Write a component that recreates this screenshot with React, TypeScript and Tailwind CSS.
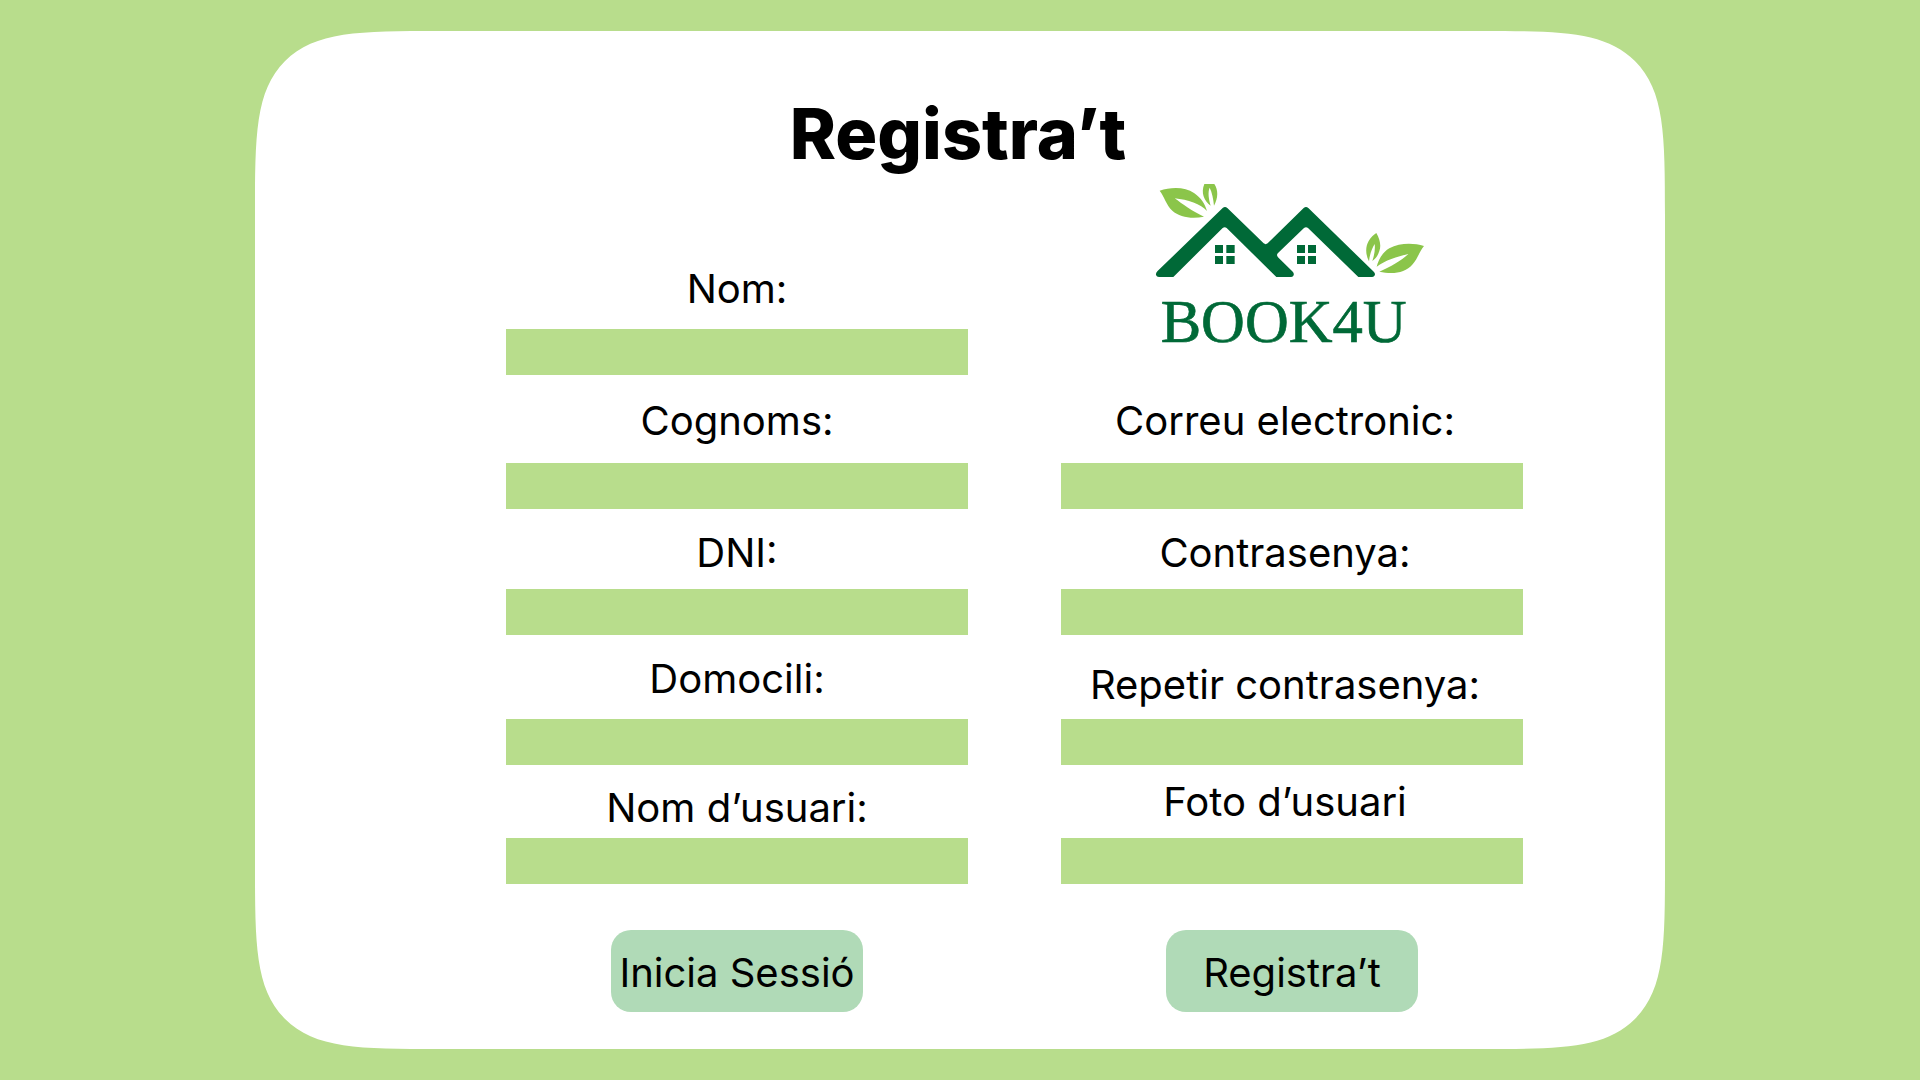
type FieldProps = {
  id: string;
  label: string;
  type?: string;
  labelClass: string;
};

function Field({ id, label, type = "text", labelClass }: FieldProps) {
  return (
    <div className="flex flex-col">
      <label htmlFor={id} className={`text-center text-[40px] leading-[48px] ${labelClass}`}>
        {label}
      </label>
      <input
        id={id}
        name={id}
        type={type}
        className="h-[46px] w-full bg-[#b8dd8c] px-3 text-2xl outline-none file:hidden focus:ring-2 focus:ring-[#006937] [&[type=file]]:text-transparent"
      />
    </div>
  );
}

function Logo() {
  return (
    <svg viewBox="42 39 828 522" className="mb-[18px] w-[276px] justify-self-center" role="img" aria-label="BOOK4U">
      <g fill="#8bc54a">
        <path d="M59 62C93 50 136 50 162 69C184 84 195 102 201 123C183 103 143 89 104 85C126 101 157 125 192 140C155 147 119 142 97 122C78 104 73 79 59 62Z" />
        <path d="M193 42H223C235 60 235 83 222 107C220 87 216 67 209 53C203 67 206 87 212 107C192 93 182 68 193 42Z" />
        <path d="M709 189C720 208 724 228 718 243C713 258 707 266 697 273C703 255 706 238 704 222C695 237 689 254 687 274C676 253 676 230 686 213C692 202 701 195 709 189Z" />
        <path d="M852 228C839 243 834 264 818 283C795 310 757 314 718 305C752 291 783 272 805 252C771 260 735 271 710 290C716 267 728 247 748 235C779 218 820 218 852 228Z" />
      </g>
      <g fill="#006937">
        <path d="M248 114Q255 108 262 114L371 220Q377 225 383 220L491 114Q498 108 505 114L702 306Q708 313 702 319Q700 321 696 321H655L504 174Q498 169 492 174L414 249Q408 255 414 262L459 306Q464 313 459 319Q457 321 453 321H409L260 174Q254 169 248 174L100 321H57Q50 321 48 315Q47 309 52 304Z" />
        <path d="M225 225h24v24h-24zM259 225h25v24h-25zM225 258h24v24h-24zM259 258h25v24h-25zM471 225h24v24h-24zM504 225h24v24h-24zM471 258h24v24h-24zM504 258h24v24h-24z" />
        <text
          x="431"
          y="516"
          textAnchor="middle"
          fontSize="182"
          stroke="#006937"
          strokeWidth="2"
          className="font-['Liberation_Serif',serif]"
        >
          BOOK4U
        </text>
      </g>
    </svg>
  );
}

const buttonClass =
  "h-[82px] w-[252px] cursor-pointer justify-self-center whitespace-nowrap rounded-[20px] bg-[#b0dab7] pt-1 text-[40px] leading-[48px]";

export default function App() {
  return (
    <main className="flex min-h-screen justify-center bg-[#b8dd8c] py-[31px] font-['Inter',sans-serif] text-black">
      <form
        onSubmit={(event) => event.preventDefault()}
        className="w-full max-w-[1410px] rounded-[189px] bg-white pt-[61px] pb-9 [corner-shape:squircle]"
      >
        <h1 className="pr-1 text-center text-[70px] leading-[84px] font-extrabold">Registra’t</h1>
        <div className="grid grid-cols-2 grid-rows-[199px_134px_126px_130px_119px] items-end gap-x-[93px] pr-[142px] pl-[251px]">
          <Field id="nom" label="Nom:" labelClass="mb-4" />
          <Logo />
          <Field id="cognoms" label="Cognoms:" labelClass="mb-[18px]" />
          <Field id="correu" label="Correu electronic:" type="email" labelClass="mb-[18px] pr-3.5" />
          <Field id="dni" label="DNI:" labelClass="mb-3" />
          <Field id="contrasenya" label="Contrasenya:" type="password" labelClass="mb-3 pr-3.5" />
          <Field id="domicili" label="Domocili:" labelClass="mb-4" />
          <Field id="repetir" label="Repetir contrasenya:" type="password" labelClass="mb-2.5 pr-3.5" />
          <Field id="usuari" label="Nom d’usuari:" labelClass="mb-1.5" />
          <Field id="foto" label="Foto d’usuari" type="file" labelClass="mb-3 pr-3.5" />
        </div>
        <div className="mt-[46px] grid grid-cols-2 gap-x-[93px] pr-[142px] pl-[251px]">
          <button type="button" className={buttonClass}>
            Inicia Sessió
          </button>
          <button type="submit" className={buttonClass}>
            Registra’t
          </button>
        </div>
      </form>
    </main>
  );
}
